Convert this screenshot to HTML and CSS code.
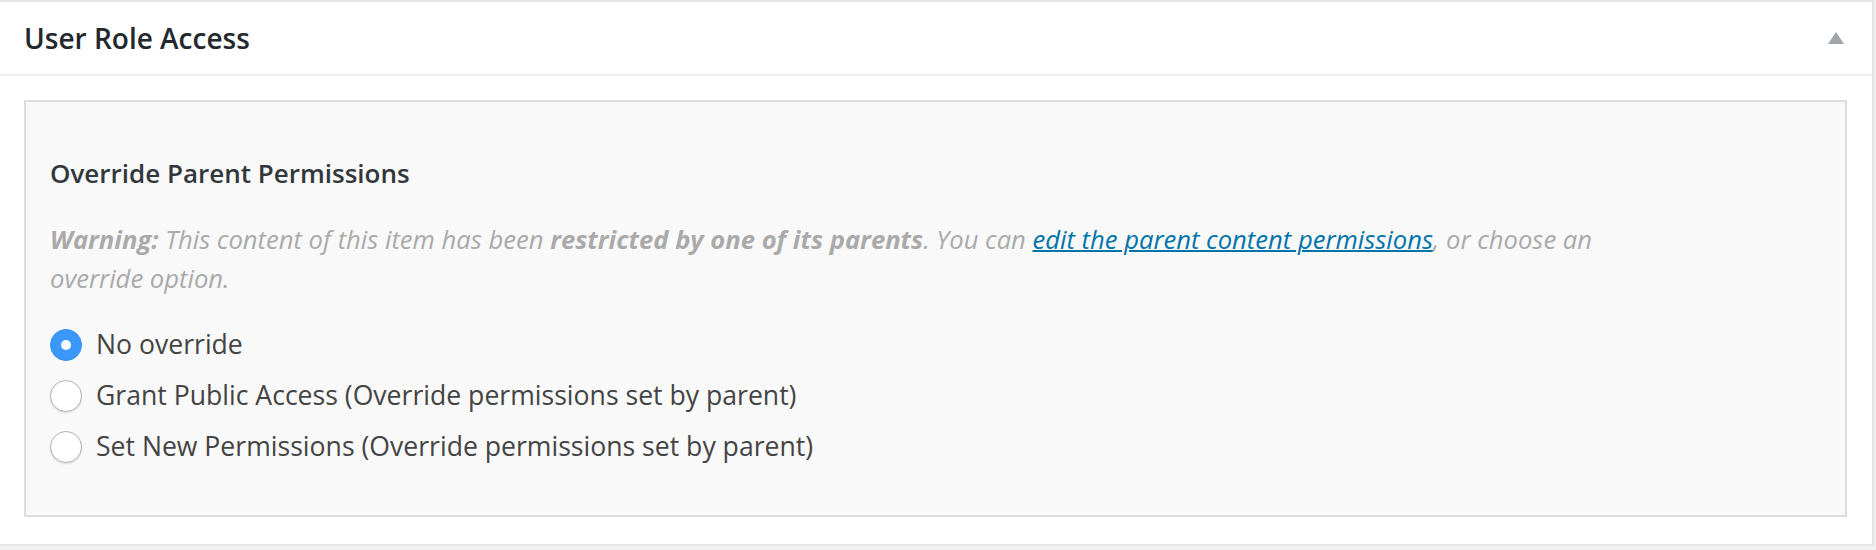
FILE: index.html
```html
<!DOCTYPE html>
<html lang="en">
<head>
<meta charset="utf-8">
<title>User Role Access</title>
<link rel="stylesheet" href="styles.css">
</head>
<body>
<div class="postbox">
  <div class="hndle">
    <h2 class="hndle-title">User Role Access</h2>
    <span class="toggle" aria-hidden="true">
      <svg width="16" height="12" viewBox="0 0 16 12"><polygon points="8,0 16,12 0,12" fill="#a0a5aa"/></svg>
    </span>
  </div>
  <div class="inside">
    <div class="override-box">
      <h4 class="override-title">Override Parent Permissions</h4>
      <p class="warning"><strong>Warning:</strong> This content of this item has been <strong>restricted by one of its parents</strong>. You can <a href="#" class="warn-link">edit the parent content permissions</a>, or choose an override option.</p>
      <div class="options">
        <label class="option"><input type="radio" name="ov" class="radio" checked><span>No override</span></label>
        <label class="option"><input type="radio" name="ov" class="radio"><span>Grant Public Access (Override permissions set by parent)</span></label>
        <label class="option"><input type="radio" name="ov" class="radio"><span>Set New Permissions (Override permissions set by parent)</span></label>
      </div>
    </div>
  </div>
</div>
</body>
</html>
```
FILE: styles.css
```css
html, body {
  margin: 0;
  padding: 0;
  background: #f1f1f1;
}
body {
  font-family: "Open Sans", "Liberation Sans", sans-serif;
  color: #444;
}
.postbox {
  box-sizing: border-box;
  margin: 0 2px 0 -2px;
  border: 2px solid #e5e5e5;
  background: #fff;
  box-shadow: 0 2px 2px rgba(0,0,0,0.04);
}
.hndle {
  display: flex;
  align-items: center;
  justify-content: space-between;
  padding: 16px 28px 16px 24px;
  border-bottom: 2px solid #eee;
}
.hndle-title {
  margin: 0;
  font-size: 28px;
  line-height: 40px;
  font-weight: 600;
  color: #23282d;
}
.toggle {
  display: flex;
  width: 16px;
  height: 12px;
}
.inside {
  padding: 24px 25px 27px 24px;
}
.override-box {
  border: 2px solid #ddd;
  background: #f9f9f9;
  padding: 53px 24px 49px 24px;
}
.override-title {
  margin: 0;
  font-size: 26px;
  line-height: 36px;
  font-weight: 600;
  color: #32373c;
}
.warning {
  margin: 29px 0 0 0;
  max-width: 1600px;
  font-size: 25.6px;
  line-height: 39px;
  font-style: italic;
  color: #aaa;
}
.warning strong {
  font-weight: 700;
}
.warn-link {
  color: #0073aa;
  text-decoration: underline;
  text-decoration-thickness: 2px;
}
.options {
  margin-top: 26px;
  display: flex;
  flex-direction: column;
  gap: 11px;
}
.option {
  display: flex;
  align-items: flex-start;
  gap: 14px;
  font-size: 26.6px;
  line-height: 40px;
  color: #444;
}
.radio {
  appearance: none;
  -webkit-appearance: none;
  box-sizing: border-box;
  margin: 5px 0 0 0;
  width: 32px;
  height: 32px;
  flex: 0 0 32px;
  border-radius: 50%;
  border: 1px solid #b5b5b5;
  background: #fff;
  box-shadow: 0 1px 2px rgba(0,0,0,0.12);
  position: relative;
}
.radio:checked {
  border-color: #3590f2;
  background: #3a98fb;
  box-shadow: none;
}
.radio:checked::after {
  content: "";
  position: absolute;
  left: 50%;
  top: 50%;
  width: 10px;
  height: 10px;
  margin: -5px 0 0 -5px;
  border-radius: 50%;
  background: #fff;
}
```
